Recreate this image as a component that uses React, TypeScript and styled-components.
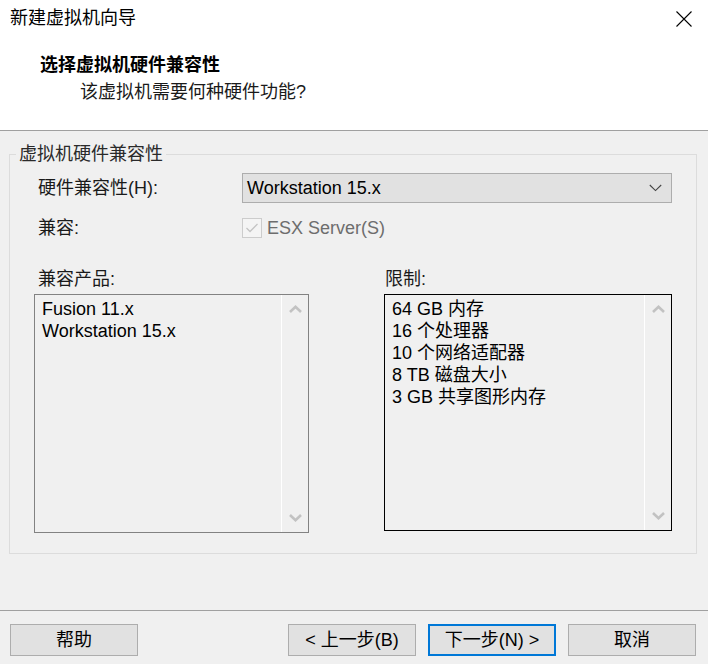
import styled, { createGlobalStyle } from 'styled-components'

const GlobalStyle = createGlobalStyle`
  html, body {
    margin: 0;
    padding: 0;
    background: #f0f0f0;
  }

  body {
    font-family: "Liberation Sans", "Noto Sans CJK SC", sans-serif;
    font-size: 18px;
    color: #000000;
  }
`

const products = ['Fusion 11.x', 'Workstation 15.x']
const limits = ['64 GB 内存', '16 个处理器', '10 个网络适配器', '8 TB 磁盘大小', '3 GB 共享图形内存']

const ChevronUp = () => (
  <svg width="13" height="8" viewBox="0 0 13 8">
    <path d="M1 7 L6.5 1.8 L12 7" fill="none" stroke="#c2c2c2" strokeWidth="2.6" />
  </svg>
)

const ChevronDown = () => (
  <svg width="13" height="8" viewBox="0 0 13 8">
    <path d="M1 1 L6.5 6.2 L12 1" fill="none" stroke="#c2c2c2" strokeWidth="2.6" />
  </svg>
)

type ListProps = {
  items: string[]
  focused?: boolean
  height: number
  width: number
}

const ListBox = ({ items, focused, height, width }: ListProps) => (
  <List $focused={focused} style={{ height, width }}>
    <Items>
      {items.map((item) => (
        <Item key={item}>{item}</Item>
      ))}
    </Items>
    <ScrollBar>
      <ScrollArrow>
        <ChevronUp />
      </ScrollArrow>
      <ScrollArrow>
        <ChevronDown />
      </ScrollArrow>
    </ScrollBar>
  </List>
)

const App = () => {
  return (
    <Window>
      <GlobalStyle />
      <Header>
        <TitleBar>
          <Title>新建虚拟机向导</Title>
          <CloseButton>
            <svg width="16" height="16" viewBox="0 0 16 16">
              <path d="M0.5 0.5 L15.5 15.5 M15.5 0.5 L0.5 15.5" stroke="#000" strokeWidth="1.1" />
            </svg>
          </CloseButton>
        </TitleBar>
        <Heading>选择虚拟机硬件兼容性</Heading>
        <SubHeading>该虚拟机需要何种硬件功能?</SubHeading>
      </Header>

      <Main>
        <GroupBox>
          <Legend>虚拟机硬件兼容性</Legend>
          <FormRow>
            <FieldLabel>硬件兼容性(H):</FieldLabel>
            <Select>
              <span>Workstation 15.x</span>
              <svg width="13" height="8" viewBox="0 0 13 8">
                <path d="M0.8 1 L6.5 6.6 L12.2 1" fill="none" stroke="#444" strokeWidth="1.1" />
              </svg>
            </Select>
          </FormRow>
          <FormRow $gap={10}>
            <FieldLabel>兼容:</FieldLabel>
            <CheckLabel>
              <CheckBox>
                <svg width="14" height="12" viewBox="0 0 14 12">
                  <path d="M1.5 6 L5 9.5 L12.5 2" fill="none" stroke="#c4c4c4" strokeWidth="1.3" />
                </svg>
              </CheckBox>
              ESX Server(S)
            </CheckLabel>
          </FormRow>
          <Columns>
            <Column>
              <ColumnLabel $indent={4}>兼容产品:</ColumnLabel>
              <ListBox items={products} width={275} height={239} />
            </Column>
            <Column>
              <ColumnLabel $indent={1}>限制:</ColumnLabel>
              <ListBox items={limits} width={288} height={237} focused />
            </Column>
          </Columns>
        </GroupBox>
      </Main>

      <Footer>
        <Button>帮助</Button>
        <ButtonGroup>
          <Button>&lt; 上一步(B)</Button>
          <Button $primary>下一步(N) &gt;</Button>
          <Button>取消</Button>
        </ButtonGroup>
      </Footer>
    </Window>
  )
}

const Window = styled.div`
  width: 708px;
  height: 664px;
  display: flex;
  flex-direction: column;
  background: #f0f0f0;
  overflow: hidden;
`

const Header = styled.div`
  height: 130px;
  flex-shrink: 0;
  background: #ffffff;
  border-bottom: 1px solid #a0a0a0;
  box-sizing: content-box;
`

const TitleBar = styled.div`
  height: 36px;
  display: flex;
  align-items: center;
  justify-content: space-between;
  padding: 0 16px 0 10px;
`

const Title = styled.div`
  line-height: 24px;
  color: #000000;
`

const CloseButton = styled.div`
  width: 16px;
  height: 16px;
  display: flex;
  margin-top: 1px;
`

const Heading = styled.div`
  margin-top: 17px;
  padding-left: 40px;
  line-height: 24px;
  font-weight: bold;
  color: #000000;
`

const SubHeading = styled.div`
  margin-top: 3px;
  padding-left: 80px;
  line-height: 24px;
  color: #1a1a1a;
`

const Main = styled.div`
  flex: 1;
  padding: 12px 11px 0 9px;
`

const GroupBox = styled.fieldset`
  margin: 0;
  padding: 8px 24px 20px 24px;
  border: 1px solid #dcdcdc;
  display: flex;
  flex-direction: column;
`

const Legend = styled.legend`
  margin-left: -18px;
  padding: 0 3px;
  line-height: 22px;
  color: #2a2a2a;
`

const FormRow = styled.div<{ $gap?: number }>`
  display: flex;
  align-items: center;
  height: 30px;
  margin-top: ${(p) => p.$gap ?? 0}px;
`

const FieldLabel = styled.div`
  width: 204px;
  padding-left: 4px;
  line-height: 22px;
  color: #1a1a1a;
`

const Select = styled.div`
  flex: 1;
  height: 30px;
  box-sizing: border-box;
  display: flex;
  align-items: center;
  justify-content: space-between;
  padding: 0 9px 0 4px;
  background: #e1e1e1;
  border: 1px solid #adadad;
  line-height: 22px;
`

const CheckLabel = styled.div`
  display: flex;
  align-items: center;
  gap: 5px;
  color: #6d6d6d;
  line-height: 22px;
`

const CheckBox = styled.div`
  width: 20px;
  height: 20px;
  box-sizing: border-box;
  border: 1px solid #cccccc;
  background: #f4f4f4;
  display: flex;
  align-items: center;
  justify-content: center;
`

const Columns = styled.div`
  display: flex;
  justify-content: space-between;
  align-items: flex-start;
  margin-top: 25px;
`

const Column = styled.div`
  display: flex;
  flex-direction: column;
  gap: 4px;
`

const ColumnLabel = styled.div<{ $indent: number }>`
  padding-left: ${(p) => p.$indent}px;
  line-height: 22px;
  color: #1a1a1a;
`

const List = styled.div<{ $focused?: boolean }>`
  box-sizing: border-box;
  display: flex;
  border: 1px solid ${(p) => (p.$focused ? '#000000' : '#828282')};
  background: #f0f0f0;
`

const Items = styled.div`
  flex: 1;
  padding: 3px 7px;
`

const Item = styled.div`
  line-height: 22px;
  white-space: nowrap;
`

const ScrollBar = styled.div`
  width: 26px;
  border-left: 1px solid #ffffff;
  display: flex;
  flex-direction: column;
  justify-content: space-between;
`

const ScrollArrow = styled.div`
  height: 28px;
  display: flex;
  align-items: center;
  justify-content: center;
`

const Footer = styled.div`
  height: 54px;
  flex-shrink: 0;
  box-sizing: border-box;
  border-top: 1px solid #a0a0a0;
  display: flex;
  align-items: flex-start;
  justify-content: space-between;
  padding: 13px 12px 0 10px;
`

const ButtonGroup = styled.div`
  display: flex;
  gap: 12px;
`

const Button = styled.button<{ $primary?: boolean }>`
  width: 128px;
  height: 32px;
  box-sizing: border-box;
  margin: 0;
  padding: 0;
  background: #e1e1e1;
  border: ${(p) => (p.$primary ? '2px solid #0078d7' : '1px solid #adadad')};
  font-family: "Liberation Sans", "Noto Sans CJK SC", sans-serif;
  font-size: 18px;
  line-height: 22px;
  color: #000000;
`

export default App
